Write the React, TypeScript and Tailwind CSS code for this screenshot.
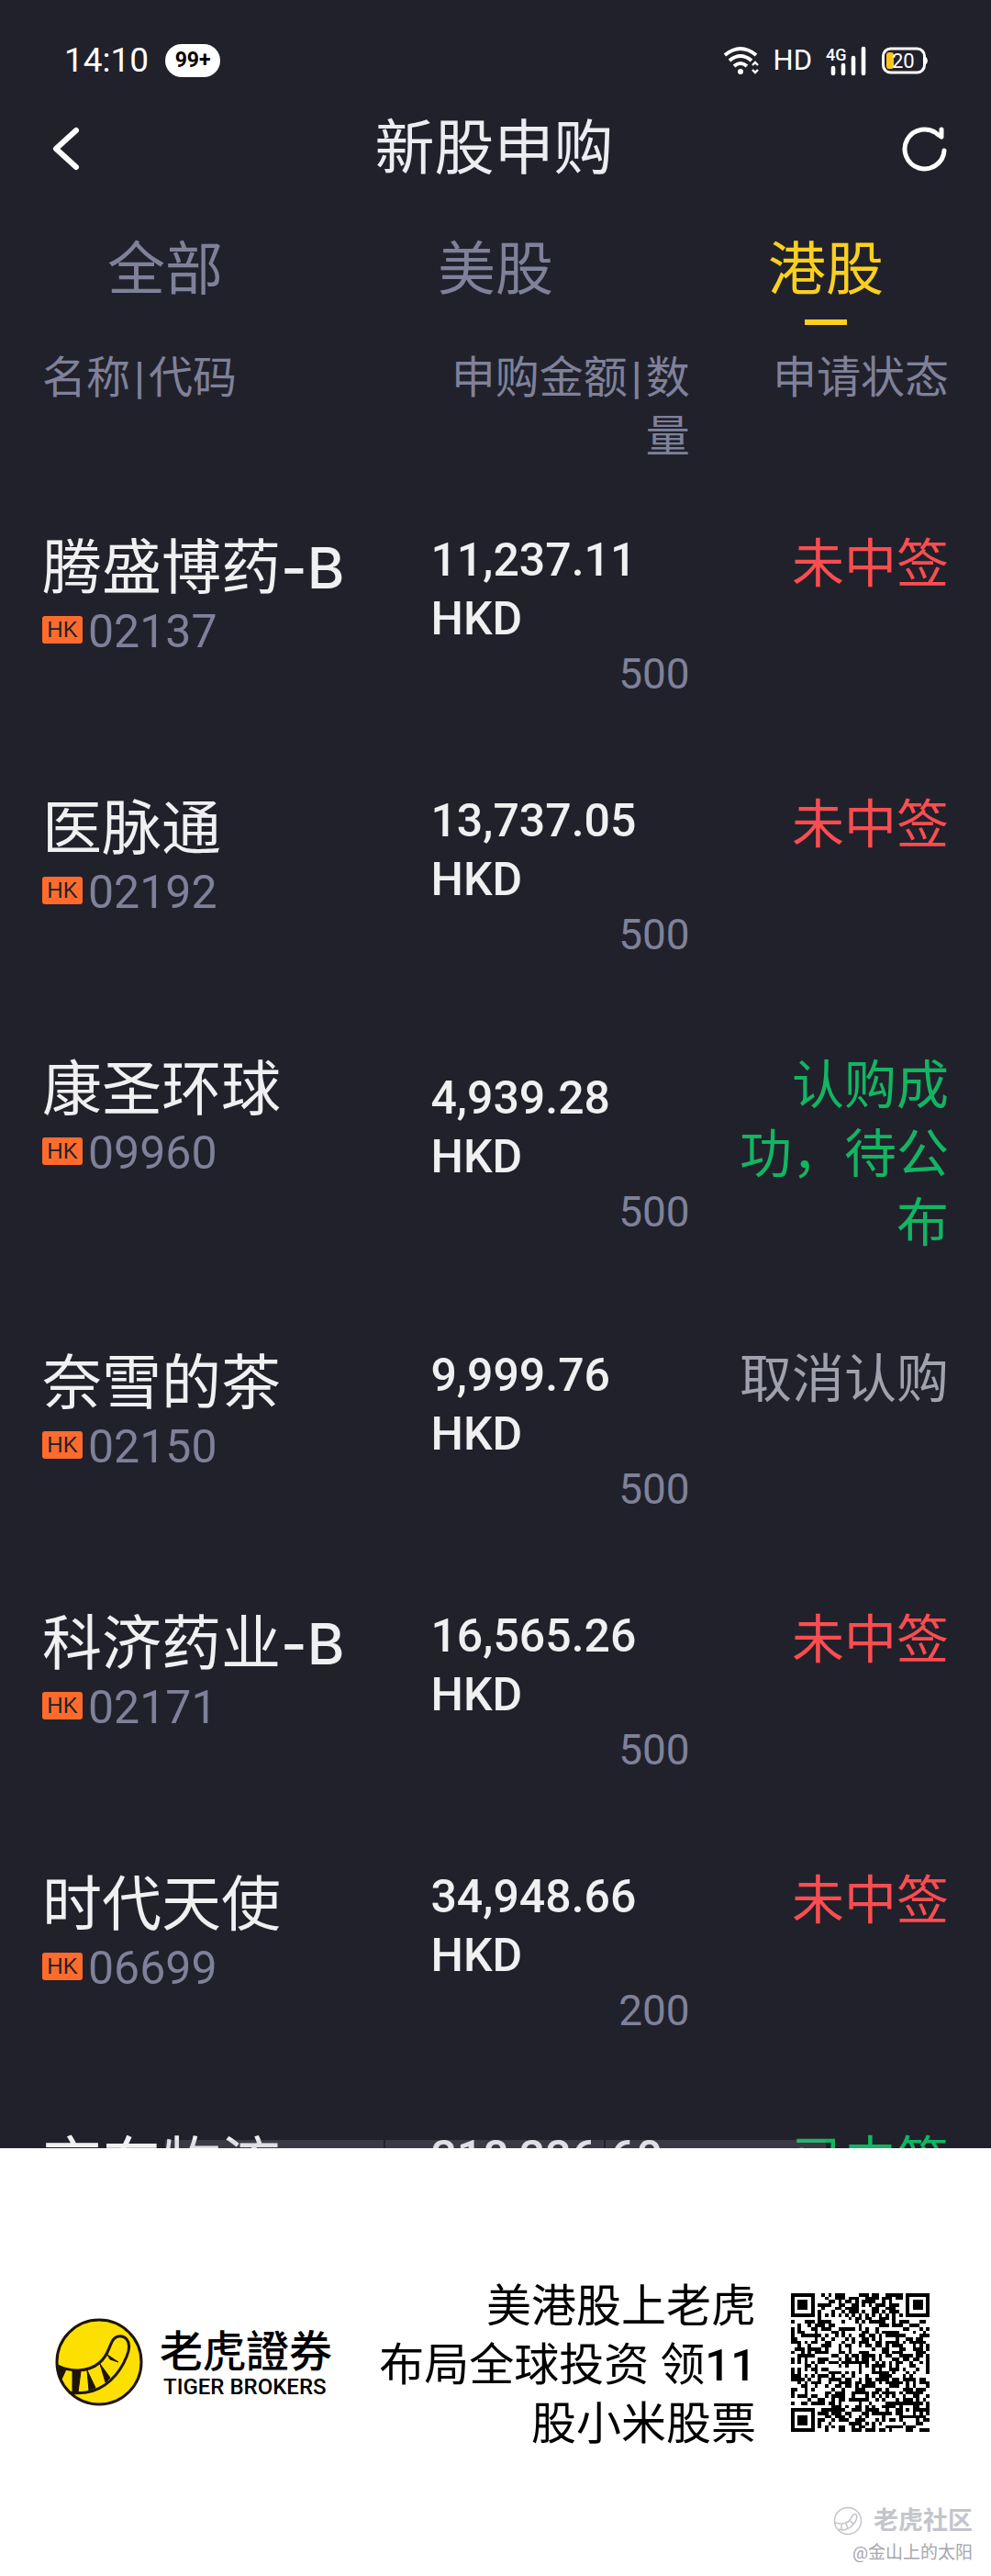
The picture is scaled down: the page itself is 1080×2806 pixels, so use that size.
type Row = { name: string; suffix?: string; code?: string; amount: string; qty?: string; status: string; tone: string };

const RED = "text-[#fb4d50]";
const GREEN = "text-[#12b562]";
const GREY = "text-[#a0a1ae]";

const rows: Row[] = [
  { name: "腾盛博药", suffix: "-B", code: "02137", amount: "11,237.11", qty: "500", status: "未中签", tone: RED },
  { name: "医脉通", code: "02192", amount: "13,737.05", qty: "500", status: "未中签", tone: RED },
  { name: "康圣环球", code: "09960", amount: "4,939.28", qty: "500", status: "认购成功，待公布", tone: GREEN },
  { name: "奈雪的茶", code: "02150", amount: "9,999.76", qty: "500", status: "取消认购", tone: GREY },
  { name: "科济药业", suffix: "-B", code: "02171", amount: "16,565.26", qty: "500", status: "未中签", tone: RED },
  { name: "时代天使", code: "06699", amount: "34,948.66", qty: "200", status: "未中签", tone: RED },
];

const peekRow: Row = { name: "京东物流", amount: "218,226.60", status: "已中签", tone: GREEN };

const QR_SIZE = 41;

function finder(x: number, y: number): boolean | null {
  for (const [ox, oy] of [[0, 0], [QR_SIZE - 7, 0], [0, QR_SIZE - 7]]) {
    const dx = x - ox;
    const dy = y - oy;
    if (dx >= -1 && dx <= 7 && dy >= -1 && dy <= 7) {
      const d = Math.max(Math.abs(dx - 3), Math.abs(dy - 3));
      return d === 3 || d <= 1;
    }
  }
  return null;
}

function qrPath(): string {
  let seed = 20137;
  let d = "";
  for (let y = 0; y < QR_SIZE; y++) {
    for (let x = 0; x < QR_SIZE; x++) {
      seed = (seed * 1103515245 + 12345) % 2147483648;
      let on = (seed >> 16) % 100 < 51;
      const f = finder(x, y);
      const a = Math.max(Math.abs(x - 34), Math.abs(y - 34));
      if (f !== null) on = f;
      else if (a <= 2) on = a !== 1;
      else if (x === 6) on = y % 2 === 0;
      else if (y === 6) on = x % 2 === 0;
      if (on) d += `M${x} ${y}h1v1h-1z`;
    }
  }
  return d;
}

function TigerMark({ className }: { className: string }) {
  return (
    <svg viewBox="0 0 96 96" className={className} aria-hidden="true">
      <circle cx="48" cy="48" r="46" fill="#fde000" stroke="#1e1508" strokeWidth="3" />
      <path d="M3 52C15 58 35 60 48 49C58 41 58 33 62 26C65 19 73 18 78 23C82 28 81 35 78 42C70 62 54 78 34 81C27 82 20 82 15 81" fill="none" stroke="#1e1508" strokeWidth="3" />
      <path d="M2 51L12 56L7 67Q2 60 2 51ZM19 58L28 58L25 81L19 81ZM35 57L44 76L37 79ZM49 50L60 65L55 70ZM57 40L69 48L60 45Z" fill="#1e1508" stroke="#1e1508" strokeWidth="1" />
    </svg>
  );
}

function StatusBar() {
  return (
    <div className="flex h-[132px] items-center justify-between pl-[70px] pr-[69px] text-white">
      <div className="flex items-center gap-[18px]">
        <span className="text-[37px] leading-[44px]">14:10</span>
        <span className="flex h-[36px] w-[60px] items-center justify-center rounded-full bg-white text-[23px] font-bold text-black">99+</span>
      </div>
      <div className="flex items-center gap-[15px]">
        <svg viewBox="0 0 40 32" className="h-[32px] w-[40px]" fill="none" stroke="#fff" strokeWidth="4" aria-hidden="true">
          <path d="M2 10Q19-4 36 10" />
          <path d="M7 16Q19 6 31 16" />
          <path d="M12 22Q19 16 26 22" />
          <circle cx="19" cy="28" r="3" fill="#fff" stroke="none" />
          <path d="M32 21l3-3 3 3M32 26l3 3 3-3" strokeWidth="2.4" />
        </svg>
        <span className="text-[31px] leading-[40px]">HD</span>
        <svg viewBox="0 0 46 32" className="h-[32px] w-[46px] overflow-visible" aria-hidden="true">
          <text x="0" y="16" fill="#fff" fontSize="18" fontFamily="Roboto, sans-serif" fontWeight="500">4G</text>
          <path d="M8 24v6M19 21v9M30 13v17M41 3v27" stroke="#fff" strokeWidth="4.6" strokeLinecap="round" />
        </svg>
        <svg viewBox="0 0 50 30" className="h-[30px] w-[50px] overflow-visible" aria-hidden="true">
          <rect x="1.5" y="2" width="45" height="26" rx="8" fill="none" stroke="#fff" strokeWidth="3" />
          <path d="M47 10q3 2 3 5t-3 5z" fill="#fff" />
          <rect x="5" y="6" width="8" height="18" rx="3" fill="#fdc41a" />
          <text x="11" y="23" fill="#fff" fontSize="22" fontFamily="Roboto, sans-serif">20</text>
        </svg>
      </div>
    </div>
  );
}

function Bar() {
  return <span className="px-[4px] font-medium">|</span>;
}

export default function App() {
  return (
    <main className="w-full bg-white font-[Roboto,'Noto_Sans_CJK_SC',sans-serif]">
      <div className="relative bg-[#21212b]">
        <StatusBar />

        <header className="flex h-[60px] items-center justify-between pl-[50px] pr-[47px]">
          <button type="button" aria-label="返回" className="text-white">
            <svg viewBox="0 0 44 50" className="h-[50px] w-[44px]" fill="none" stroke="currentColor" strokeWidth="6" strokeLinecap="round" strokeLinejoin="round">
              <path d="M33 5L11 25L33 45" />
            </svg>
          </button>
          <h1 className="text-[65px] leading-[64px] text-[#ededf1]">新股申购</h1>
          <button type="button" aria-label="刷新" className="text-white">
            <svg viewBox="0 0 50 50" className="h-[50px] w-[50px]" fill="none" stroke="currentColor" strokeWidth="5" strokeLinecap="round" strokeLinejoin="round">
              <path d="M46 27A21.500 21.500 0 1 1 39 9.500L43 12V4V12" />
            </svg>
          </button>
        </header>

        <nav className="grid grid-cols-3 pt-[56px]">
          {["全部", "美股", "港股"].map((t) => (
            <button key={t} type="button" className={`flex flex-col items-center text-[63px] leading-[92px] ${t === "港股" ? "text-[#fad020]" : "text-[#7f819a]"}`}>
              {t}
              <span className={`mt-[8px] h-[6px] w-[46px] ${t === "港股" ? "bg-[#fad020]" : "bg-transparent"}`} />
            </button>
          ))}
        </nav>

        <table className="block px-[46px] pt-[26px]">
          <thead className="block text-[48px] leading-[64px] text-[#7f819a]">
            <tr className="grid grid-cols-[3fr_2fr_2fr] pb-[20px]">
              <th className="text-left font-normal">名称<Bar />代码</th>
              <th className="text-right font-normal">申购金额<Bar />数量</th>
              <th className="text-right font-normal">申请状态</th>
            </tr>
          </thead>
          <tbody className="block">
            {[...rows, peekRow].map((r) => (
              <tr key={r.name} className={`grid grid-cols-[3fr_2fr_2fr] pt-[46px] ${r.code ? "pb-[46px]" : "h-[72px] overflow-hidden"}`}>
                <td className="pt-[6px] text-[#f0f0f2]">
                  <div className="text-[65px] leading-[78px]">
                    {r.name}
                    {r.suffix && <span className="font-[Inter,sans-serif] text-[62px] font-medium">{r.suffix}</span>}
                  </div>
                  {r.code && (
                    <div className="flex items-center gap-[6px]">
                      <span className="mb-[4px] flex h-[30px] w-[44px] items-center justify-center rounded-[3px] bg-[#ff6b2c] font-['Liberation_Sans',sans-serif] text-[24px] leading-[30px] text-[#21212b]">HK</span>
                      <span className="text-[50px] leading-[60px] text-[#7f819a]">{r.code}</span>
                    </div>
                  )}
                </td>
                <td className={`py-[4px] text-[50px] font-medium leading-[64px] text-[#f0f0f2] ${r.code ? "self-center" : ""}`}>
                  <div>{r.amount}</div>
                  {r.qty && <div>HKD</div>}
                  {r.qty && <div className="text-right text-[46px] font-normal leading-[56px] text-[#7f819a]">{r.qty}</div>}
                </td>
                <td className={`pt-[3px] text-right text-[57px] leading-[75px] ${r.tone}`}>{r.status}</td>
              </tr>
            ))}
          </tbody>
        </table>

        <div className="absolute inset-x-0 bottom-0 mx-auto grid h-[9px] w-2/3 grid-cols-3 divide-x-2 divide-[#22222c] bg-[#a0a0b0]/20">
          <span />
          <span />
          <span />
        </div>
      </div>

      <footer className="relative flex h-[466px] items-center justify-between pl-[60px] pr-[67px] text-black">
        <div className="flex items-center gap-[18px]">
          <TigerMark className="h-[96px] w-[96px]" />
          <div className="flex flex-col gap-[6px]">
            <div className="font-['Noto_Sans_CJK_TC',sans-serif] text-[47px] font-medium leading-[48px]">老虎證券</div>
            <div className="pl-[4px] text-[24px] font-medium leading-[24px]">TIGER BROKERS</div>
          </div>
        </div>
        <div className="flex items-center gap-[38px]">
          <p className="pt-[8px] text-right text-[49px] leading-[64px]">
            美港股上老虎
            <br />
            布局全球投资 领<span className="font-medium">11</span>
            <br />
            股小米股票
          </p>
          <svg viewBox="0 0 41 41" className="h-[151px] w-[151px]" shapeRendering="crispEdges" role="img" aria-label="二维码">
            <path d={qrPath()} fill="#000" />
          </svg>
        </div>
        <div className="absolute bottom-[8px] right-[20px] flex flex-col items-end text-[#c4c5cc]">
          <div className="flex items-center gap-[12px] text-[27px] font-bold leading-[36px]">
            <svg viewBox="0 0 32 32" className="h-[32px] w-[32px]" fill="none" stroke="currentColor" aria-hidden="true">
              <circle cx="16" cy="16" r="14.500" strokeWidth="1.500" />
              <path d="M2 18C9 20 16 19 19 14C21 10 22 8 25 9C28 12 22 25 10 26L6 25M9 20v5M14 19l2 5M19 16l3 4" strokeWidth="1.500" />
            </svg>
            老虎社区
          </div>
          <div className="text-[19px] leading-[34px] text-[#a5a6ad]">@金山上的太阳</div>
        </div>
      </footer>
    </main>
  );
}
